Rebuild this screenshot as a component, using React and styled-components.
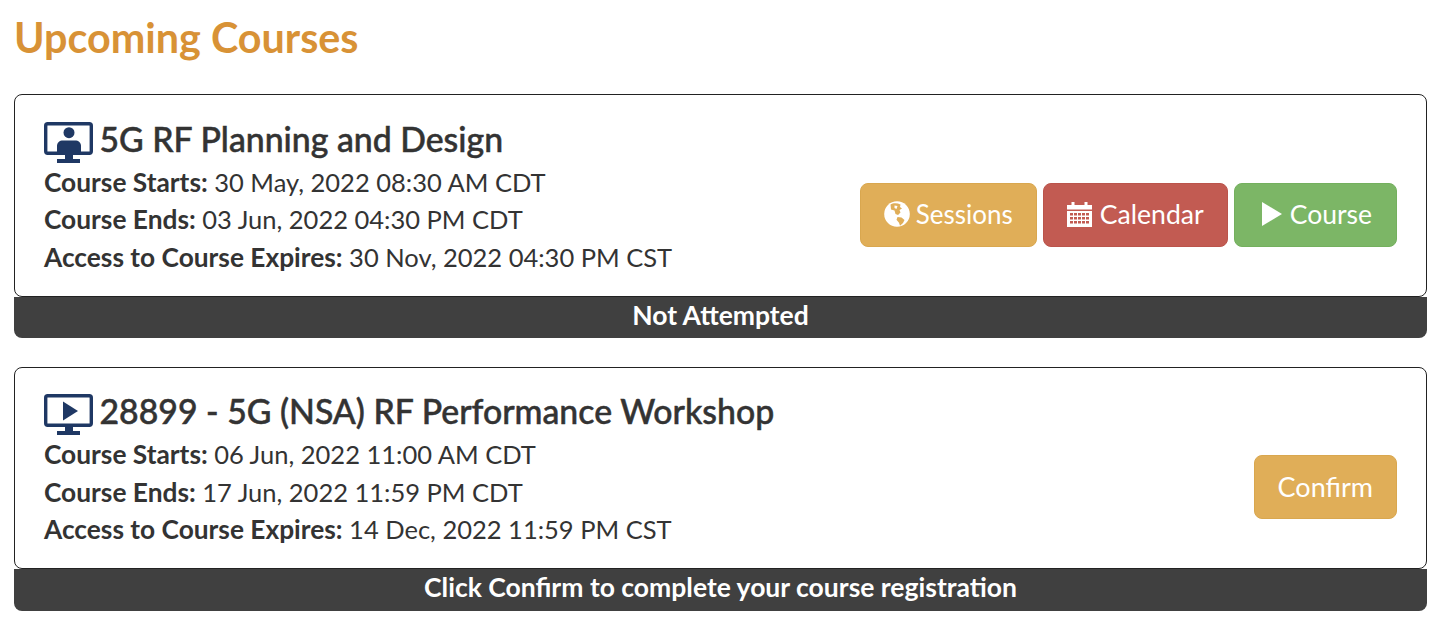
import React from "react";
import styled, { createGlobalStyle } from "styled-components";

const Global = createGlobalStyle`
  html, body { margin: 0; padding: 0; background: #fff; }
  body { font-family: Lato, "Open Sans", sans-serif; color: #333; }
`;
const Page = styled.div`
  padding: 0 14px;
  display: flex;
  flex-direction: column;
`;
const Heading = styled.h1`
  margin: 0;
  padding-top: 13px;
  height: 94.3px;
  box-sizing: border-box;
  font-size: 41.3px;
  line-height: 48px;
  font-weight: 700;
  color: #d89236;
`;
const Course = styled.section`
  margin-bottom: 29px;
`;
const Card = styled.div`
  box-sizing: border-box;
  height: 202.3px;
  border: 1px solid #222;
  border-radius: 8px;
  padding: 0 29px;
  display: flex;
  align-items: center;
  justify-content: space-between;
`;
const Info = styled.div`
  display: flex;
  flex-direction: column;
  padding-top: 1px;
`;
const Title = styled.h2`
  margin: 0 0 4px;
  display: flex;
  align-items: flex-start;
  gap: 6.5px;
  font-size: 33.8px;
  line-height: 46px;
  height: 44px;
  font-weight: 500;
  -webkit-text-stroke: 0.5px #333;
  color: #333;
`;
const TitleIcon = styled.svg`
  flex: none;
  width: 49px;
  height: 41px;
  margin-top: 6px;
`;
const Line = styled.div`
  font-size: 25.5px;
  line-height: 37.5px;
  color: #333;
  white-space: nowrap;
  b { font-weight: 700; font-size: 26.3px; }
`;
const Actions = styled.div`
  display: flex;
  gap: 6px;
  margin-top: 38.4px;
`;
const Button = styled.button`
  height: 64px;
  box-sizing: border-box;
  padding: 0 ${p => p.$pr || 23}px 2px 23px;
  border: 1px solid ${p => p.$border};
  border-radius: 8px;
  background: ${p => p.$bg};
  color: #fff;
  font-family: inherit;
  font-size: ${p => p.$size || 26.5}px;
  display: flex;
  align-items: center;
  gap: ${p => p.$gap || 6}px;
`;
const Status = styled.div`
  height: 41.5px;
  background: #404040;
  border-radius: 0 0 8px 8px;
  color: #fff;
  font-size: 26.5px;
  font-weight: 700;
  line-height: 37px;
  text-align: center;
`;
const NAVY = "#1f3864";
const MonitorPerson = () => (
  <TitleIcon viewBox="0 0 49 41">
    <rect x="1.700" y="1.700" width="45.600" height="29.600" rx="2" fill="#fff" stroke={NAVY} strokeWidth="3.400" />
    <circle cx="25" cy="10.700" r="5.500" fill={NAVY} />
    <path d="M13 31v-7c0-3.500 2.500-5.500 6-5.500h12c3.500 0 6 2 6 5.500v7z" fill={NAVY} />
    <path d="M21 32h8v5h-8zM13 37h23v4H13z" fill={NAVY} />
  </TitleIcon>
);
const MonitorPlay = () => (
  <TitleIcon viewBox="0 0 49 41">
    <rect x="1.700" y="1.700" width="45.600" height="29.600" rx="2" fill="#fff" stroke={NAVY} strokeWidth="3.400" />
    <path d="M19 7.500L34 17 19 26.500z" fill={NAVY} />
    <path d="M21 32h8v5h-8zM13 37h23v4H13z" fill={NAVY} />
  </TitleIcon>
);
const GlobeIcon = () => (
  <svg width="26" height="26" viewBox="0 0 26 26">
    <circle cx="13" cy="13" r="12.800" fill="#fff" />
    <path d="M6.500 3.500C9 2 13 1.800 16.500 3.500L16 6l2 1.500-2.500 1.500 1 2.500L14 14l-2.500-1-1 -3.500L7 8.500z" fill="#e0ae58" />
    <path d="M13.500 16l4 .5 3 2.500-1.500 3-3 2.800-1-3-2.500-3z" fill="#e0ae58" />
    <path d="M10.500 4.500l3 .5-1 3-2-1zM20 7l2.500 3-2 .5z" fill="#fff" />
  </svg>
);
const CalendarIcon = () => (
  <svg width="25" height="26" viewBox="0 0 25 26" fill="#fff">
    <path d="M0 4h4.500V1h3v3h10V1h3v3H25v4.500H0z" />
    <path fillRule="evenodd" d="M0 10h25v16H0zM3 12v2.500h3V12zm4 0v2.500h3V12zm4 0v2.500h3V12zm4 0v2.500h3V12zm4 0v2.500h3V12zM3 16v2.500h3V16zm4 0v2.500h3V16zm4 0v2.500h3V16zm4 0v2.500h3V16zm4 0v2.500h3V16zM3 20v2.500h3V20zm4 0v2.500h3V20zm4 0v2.500h3V20zm4 0v2.500h3V20zm4 0v2.500h3V20z" />
  </svg>
);
const PlayIcon = styled(({ className }) => (
  <svg className={className} width="20" height="24" viewBox="0 0 20 24" fill="#fff">
    <path d="M0 0l20 12L0 24z" />
  </svg>
))`
  margin-left: 4px;
`;

export default function App() {
  return (
    <Page>
      <Global />
      <Heading>Upcoming Courses</Heading>
      <Course>
        <Card>
          <Info>
            <Title><MonitorPerson />5G RF Planning and Design</Title>
            <Line><b>Course Starts:</b> 30 May, 2022 08:30 AM CDT</Line>
            <Line><b>Course Ends:</b> 03 Jun, 2022 04:30 PM CDT</Line>
            <Line><b>Access to Course Expires:</b> 30 Nov, 2022 04:30 PM CST</Line>
          </Info>
          <Actions>
            <Button $bg="#e0ae58" $border="#d9a74f" $size={26}><GlobeIcon />Sessions</Button>
            <Button $bg="#c25b52" $border="#bb544b" $gap={8} $size={26.6}><CalendarIcon />Calendar</Button>
            <Button $bg="#7cb666" $border="#74b05e" $gap={8} $pr={24}><PlayIcon />Course</Button>
          </Actions>
        </Card>
        <Status>Not Attempted</Status>
      </Course>
      <Course>
        <Card>
          <Info>
            <Title><MonitorPlay />28899 - 5G (NSA) RF Performance Workshop</Title>
            <Line><b>Course Starts:</b> 06 Jun, 2022 11:00 AM CDT</Line>
            <Line><b>Course Ends:</b> 17 Jun, 2022 11:59 PM CDT</Line>
            <Line><b>Access to Course Expires:</b> 14 Dec, 2022 11:59 PM CST</Line>
          </Info>
          <Actions>
            <Button $bg="#e0ae58" $border="#d9a74f" $size={27}>Confirm</Button>
          </Actions>
        </Card>
        <Status>Click Confirm to complete your course registration</Status>
      </Course>
    </Page>
  );
}
